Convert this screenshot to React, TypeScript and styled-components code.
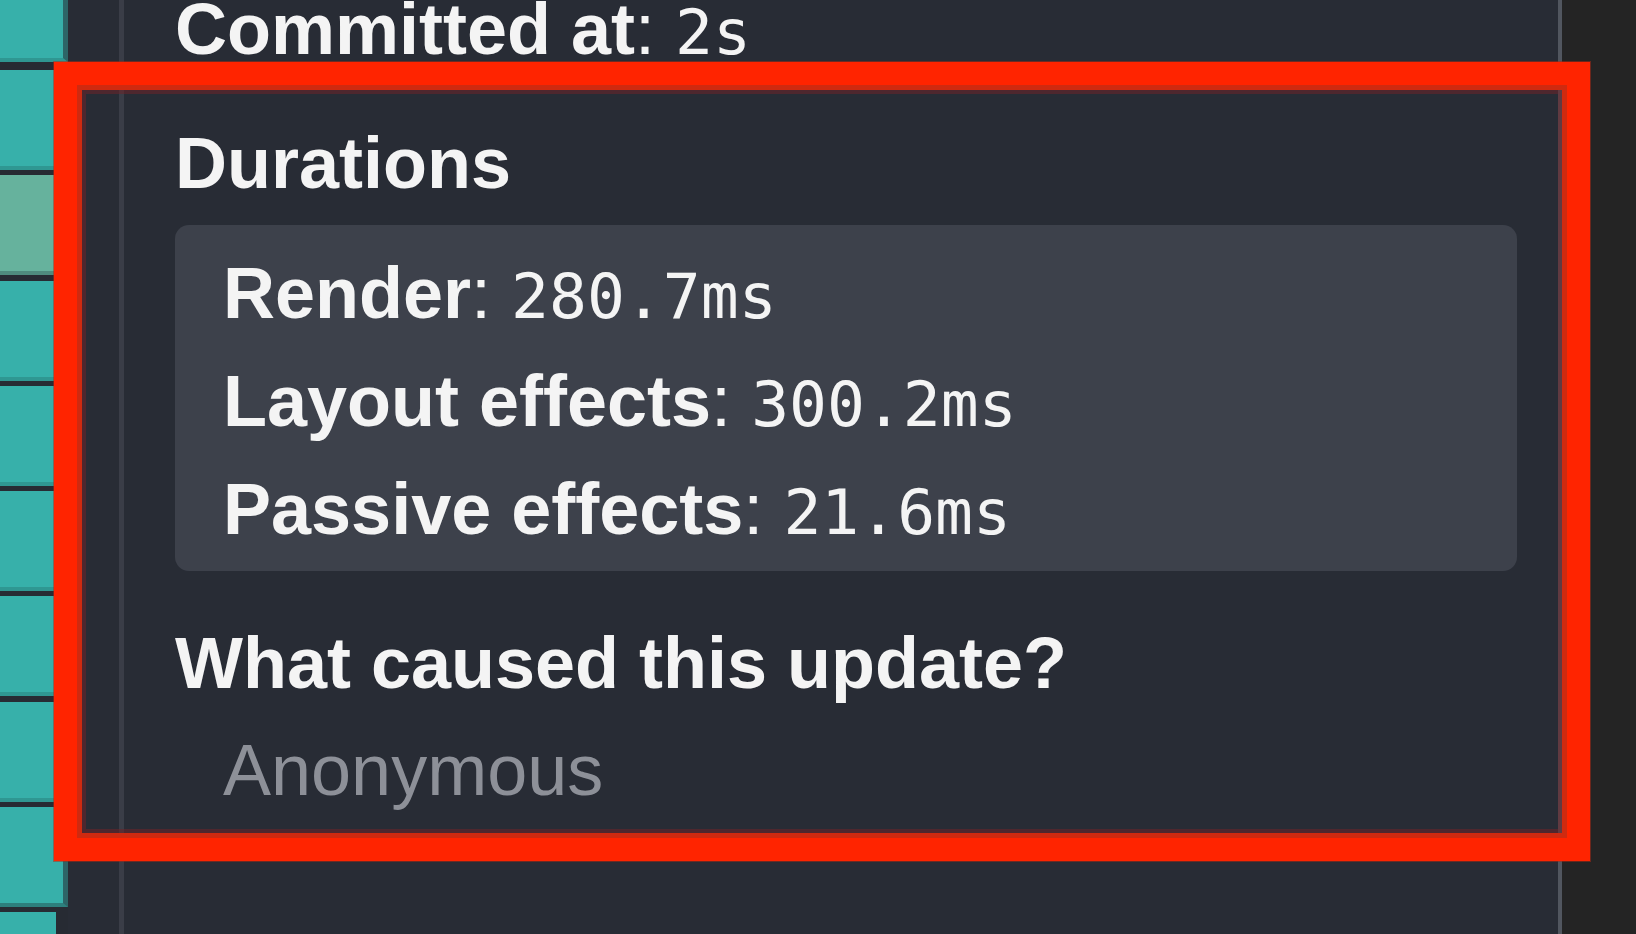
import React from "react";
import styled, { createGlobalStyle } from "styled-components";

const GlobalStyle = createGlobalStyle`
	html, body {
		margin: 0;
		padding: 0;
		background: #282c35;
		overflow: hidden;
	}
`;

const SANS = `"Liberation Sans", Arial, sans-serif`;
const MONO = `"DejaVu Sans Mono", "Liberation Mono", monospace`;

const Screen = styled.div`
	position: relative;
	display: flex;
	width: 1636px;
	height: 934px;
	overflow: hidden;
	background: #282c35;
	font-family: ${SANS};
	color: #f4f4f4;
`;

const FlameColumn = styled.div`
	flex: none;
	width: 68px;
	display: flex;
	flex-direction: column;
	gap: 5.25px;
	background: #272b33;
`;

const Bar = styled.div<{ $h: number; $w: number; $color: string; $edge: string; $side?: boolean }>`
	flex: none;
	box-sizing: border-box;
	height: ${(p) => p.$h}px;
	width: ${(p) => p.$w + (p.$side ? 5 : 0)}px;
	background: ${(p) => p.$color};
	border-bottom: 4px solid ${(p) => p.$edge};
	border-right: ${(p) => (p.$side ? "5px solid #2d6567" : "none")};
`;

const Gutter = styled.div`
	flex: none;
	width: 51px;
`;

const Sidebar = styled.div`
	flex: none;
	box-sizing: border-box;
	width: 1443px;
	border-left: 5px solid #3a3d47;
	border-right: 4px solid #51565f;
	padding: 0 41px 0 51px;
`;

const Outside = styled.div`
	flex: 1;
	background: #242424;
`;

const InfoList = styled.ul`
	list-style: none;
	margin: -25px 0 0 0;
	padding: 0;
	font-size: 72px;
	line-height: 108px;
`;

const Item = styled.li<{ $gap?: number }>`
	margin-top: ${(p) => p.$gap ?? 0}px;
	white-space: nowrap;
`;

const Label = styled.label`
	font-weight: bold;
`;

const Value = styled.span`
	font-family: ${MONO};
	font-size: 63px;
	line-height: 1;
`;

const DurationsList = styled.ul`
	list-style: none;
	margin: 8px 0 0 0;
	padding: 14px 48px 8px;
	background: #3d414b;
	border-radius: 14px;
`;

const Updater = styled.div`
	padding-left: 48px;
	margin-top: -1px;
	color: #8d9098;
`;

const Highlight = styled.div`
	position: absolute;
	left: 54px;
	top: 62px;
	width: 1536px;
	height: 799px;
	box-sizing: border-box;
	border: 23px solid #ff2400;
	box-shadow: inset 0 0 0 5px #cf2a10, inset 0 0 0 9px rgba(110, 36, 40, 0.55), 0 0 0 1px rgba(180, 40, 20, 0.5);
	pointer-events: none;
`;

const TEAL = "#37b0aa";
const TEAL_EDGE = "#2f9792";
const GREEN = "#66b29d";
const GREEN_EDGE = "#4f8b7e";

const bars = [
	{ h: 62, w: 63, c: TEAL, e: TEAL_EDGE, gap: 2.75 },
	{ h: 100, w: 63, c: TEAL, e: TEAL_EDGE },
	{ h: 100, w: 63, c: GREEN, e: GREEN_EDGE },
	{ h: 100, w: 63, c: TEAL, e: TEAL_EDGE },
	{ h: 100, w: 63, c: TEAL, e: TEAL_EDGE },
	{ h: 100, w: 63, c: TEAL, e: TEAL_EDGE },
	{ h: 100, w: 63, c: TEAL, e: TEAL_EDGE },
	{ h: 100, w: 63, c: TEAL, e: TEAL_EDGE },
	{ h: 100, w: 63, c: TEAL, e: "#2d7f7d" },
	{ h: 100, w: 56, c: TEAL, e: TEAL_EDGE, flat: true },
];

const durations = [
	{ label: "Render", value: "280.7ms" },
	{ label: "Layout effects", value: "300.2ms" },
	{ label: "Passive effects", value: "21.6ms" },
];

export default function App(): JSX.Element {
	return (
		<>
			<GlobalStyle />
			<Screen>
				<FlameColumn>
					{bars.map((b, i) => (
						<Bar
							key={i}
							$h={b.h}
							$w={b.w}
							$color={b.c}
							$edge={b.e}
							$side={!b.flat}
							style={b.gap ? { marginBottom: b.gap } : undefined}
						/>
					))}
				</FlameColumn>
				<Gutter />
				<Sidebar>
					<InfoList>
						<Item>
							<Label>Committed at</Label>: <Value>2s</Value>
						</Item>
						<Item $gap={26}>
							<Label>Durations</Label>
							<DurationsList>
								{durations.map((d) => (
									<li key={d.label}>
										<Label>{d.label}</Label>: <Value>{d.value}</Value>
									</li>
								))}
							</DurationsList>
						</Item>
						<Item $gap={38}>
							<Label>What caused this update?</Label>
							<Updater>Anonymous</Updater>
						</Item>
					</InfoList>
				</Sidebar>
				<Outside />
				<Highlight />
			</Screen>
		</>
	);
}
